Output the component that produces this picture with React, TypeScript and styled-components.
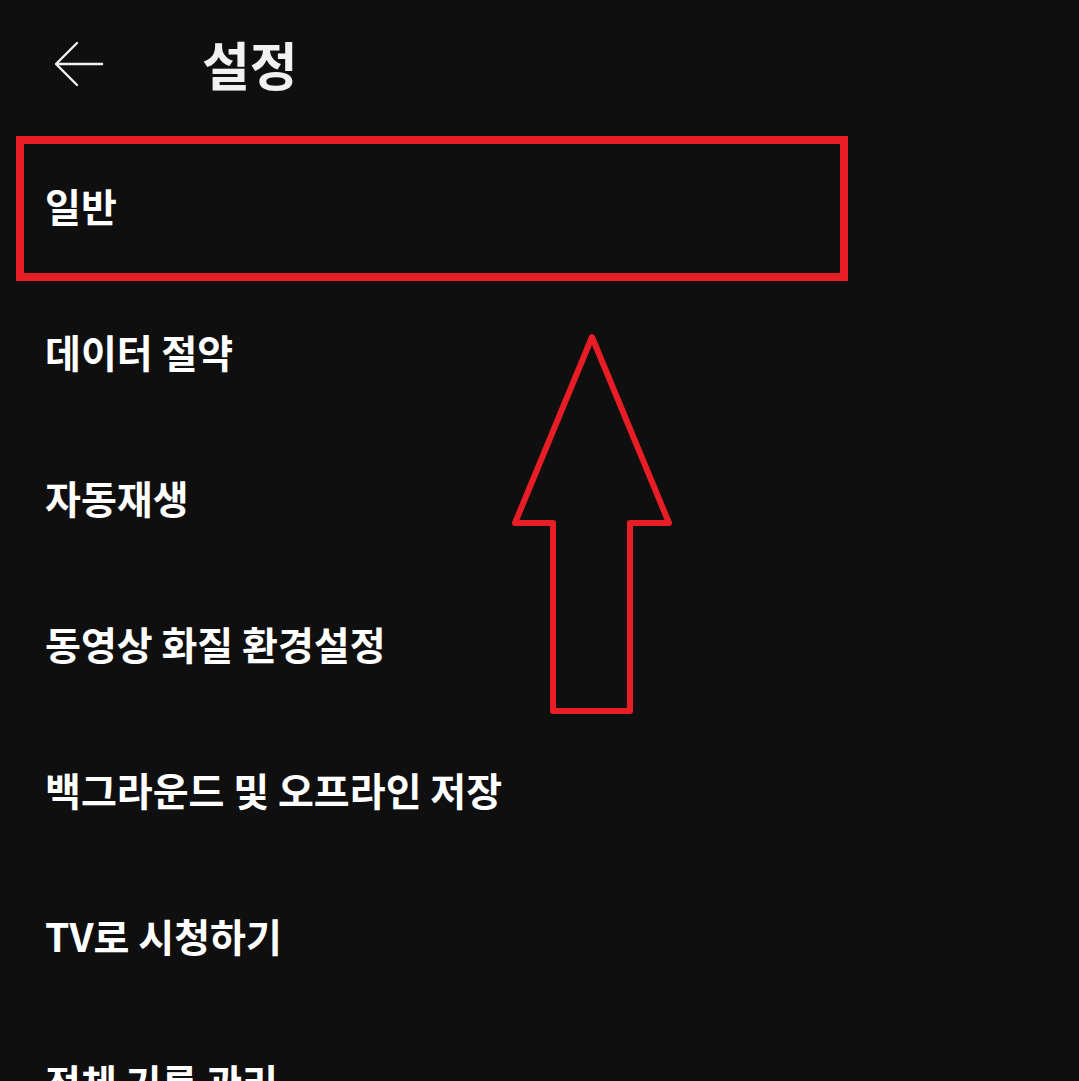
import React from 'react'
import styled, { createGlobalStyle } from 'styled-components'

const GlobalStyle = createGlobalStyle`
  html, body {
    margin: 0;
    padding: 0;
    background: #0f0f0f;
  }
  body {
    font-family: 'Noto Sans CJK KR', 'Noto Sans', sans-serif;
    color: #f1f1f1;
    overflow: hidden;
  }
`

const Page = styled.div`
  position: relative;
  width: 1079px;
  height: 1081px;
  background: #0f0f0f;
  overflow: hidden;
`

const Header = styled.header`
  display: flex;
  align-items: center;
  height: 128px;
  padding-left: 54px;
`

const BackButton = styled.button`
  display: flex;
  align-items: center;
  justify-content: center;
  width: 50px;
  height: 46px;
  padding: 0;
  border: 0;
  background: none;
  color: #f1f1f1;
`

const Title = styled.h1`
  margin: 0 0 0 98px;
  font-size: 52px;
  font-weight: 700;
  line-height: 1;
  color: #f1f1f1;
`

const List = styled.ul`
  list-style: none;
  margin: 0;
  padding: 4px 0 0;
`

const Row = styled.li`
  display: flex;
  align-items: center;
  height: 146px;
  padding-left: 45px;
  font-size: 39px;
  font-weight: 700;
  letter-spacing: 0;
  color: #ffffff;
  white-space: nowrap;
`

const Highlight = styled.div`
  position: absolute;
  left: 16px;
  top: 136px;
  width: 832px;
  height: 145px;
  box-sizing: border-box;
  border: 8px solid #e91d25;
  pointer-events: none;
`

const ArrowMark = styled.svg`
  position: absolute;
  left: 500px;
  top: 320px;
  pointer-events: none;
`

const items = [
  '일반',
  '데이터 절약',
  '자동재생',
  '동영상 화질 환경설정',
  '백그라운드 및 오프라인 저장',
  'TV로 시청하기',
  '전체 기록 관리',
]

const App = () => {
  return (
    <Page>
      <GlobalStyle />
      <Header>
        <BackButton aria-label="뒤로">
          <svg width="50" height="46" viewBox="0 0 50 46" fill="none">
            <path
              d="M48 23 H3 M23 2 L2 23 L23 44"
              stroke="#f1f1f1"
              strokeWidth="2.4"
              strokeLinecap="round"
              strokeLinejoin="round"
            />
          </svg>
        </BackButton>
        <Title>설정</Title>
      </Header>
      <List>
        {items.map((label) => (
          <Row key={label}>{label}</Row>
        ))}
      </List>
      <Highlight />
      <ArrowMark width="190" height="410" viewBox="0 0 190 410">
        <polygon
          points="92,17 169,203 130,203 130,391 53,391 53,203 15,203"
          fill="none"
          stroke="#e91d25"
          strokeWidth="6"
          strokeLinejoin="round"
        />
      </ArrowMark>
    </Page>
  )
}

export default App
